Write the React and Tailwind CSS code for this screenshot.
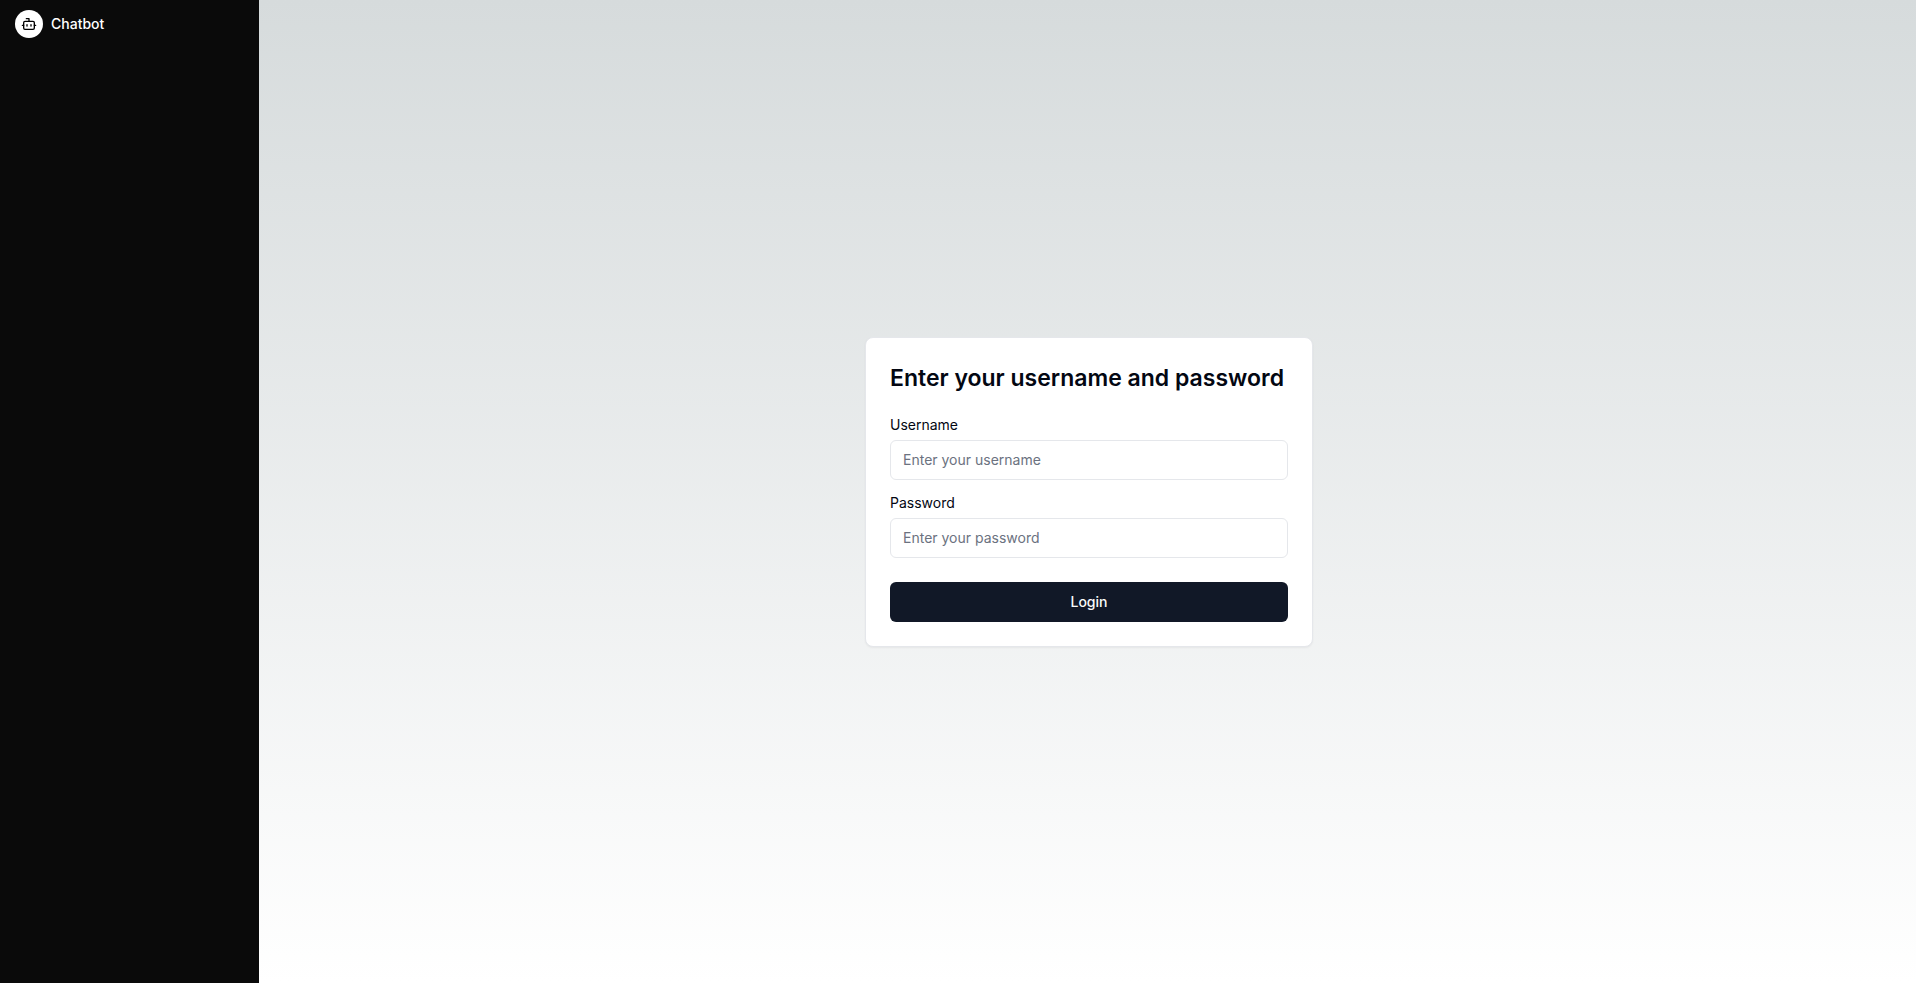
import { Bot } from "lucide-react";

function Sidebar() {
  return (
    <aside className="w-[259px] shrink-0 bg-[#0a0a0a] px-[15px] py-2.5">
      <a href="#" className="flex items-center gap-2 text-sm font-medium text-white">
        <span className="flex size-7 items-center justify-center rounded-full bg-white text-black">
          <Bot className="size-4" aria-hidden="true" />
        </span>
        Chatbot
      </a>
    </aside>
  );
}

function Field({ id, label, type, placeholder, autoComplete }) {
  return (
    <div className="flex flex-col gap-2">
      <label htmlFor={id} className="text-sm leading-none text-gray-950">
        {label}
      </label>
      <input
        id={id}
        name={id}
        type={type}
        placeholder={placeholder}
        autoComplete={autoComplete}
        className="h-10 w-full rounded-md border border-gray-200 bg-white px-3 py-2 text-sm text-gray-950 placeholder:text-[#6b7280]"
      />
    </div>
  );
}

export default function App() {
  return (
    <div className="flex min-h-screen font-[Inter,sans-serif]">
      <Sidebar />
      <main className="flex min-w-0 flex-1 items-center justify-center bg-linear-to-b/srgb from-[#d6dbdc] to-white pl-[3px]">
        <form
          onSubmit={(event) => event.preventDefault()}
          className="flex w-full max-w-md flex-col gap-6 rounded-lg border border-gray-200 bg-white p-6 shadow-xs"
        >
          <h1 className="text-[23px] leading-8 font-semibold text-gray-950">Enter your username and password</h1>
          <div className="flex flex-col gap-4">
            <Field
              id="username"
              label="Username"
              type="text"
              placeholder="Enter your username"
              autoComplete="username"
            />
            <Field
              id="password"
              label="Password"
              type="password"
              placeholder="Enter your password"
              autoComplete="current-password"
            />
          </div>
          <button type="submit" className="h-10 rounded-md bg-[#111827] px-4 text-sm font-medium text-gray-50">
            Login
          </button>
        </form>
      </main>
    </div>
  );
}
